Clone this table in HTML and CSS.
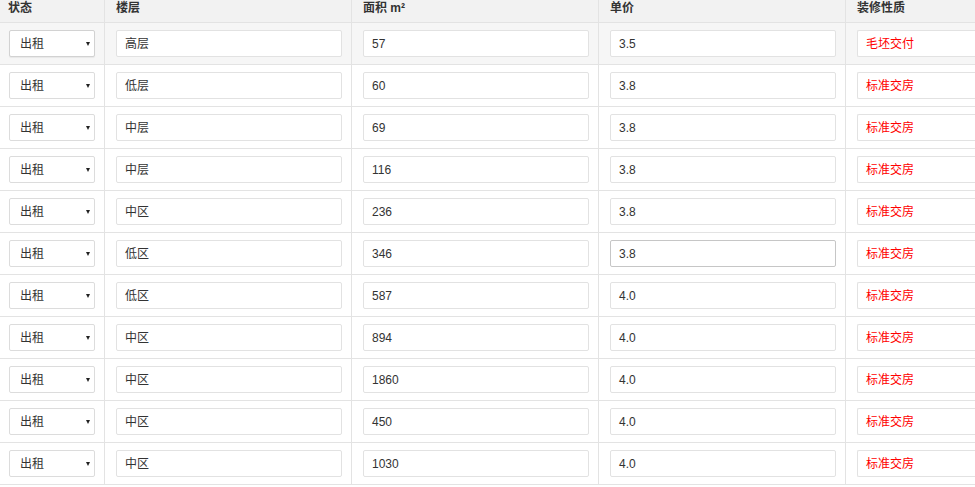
FILE: index.html
```html
<!DOCTYPE html>
<html lang="zh">
<head>
<meta charset="utf-8">
<link rel="stylesheet" href="styles.css">
</head>
<body>
<div class="grid">
  <div class="th">状态</div><div class="th pad">楼层</div><div class="th pad">面积 m²</div><div class="th pad">单价</div><div class="th pad last">装修性质</div>

  <div class="row hover">
    <div class="td c1"><div class="sel">出租<span class="arr"></span></div></div>
    <div class="td"><div class="inp">高层</div></div>
    <div class="td"><div class="inp">57</div></div>
    <div class="td"><div class="inp">3.5</div></div>
    <div class="td last"><div class="inp red">毛坯交付</div></div>
  </div>
  <div class="row">
    <div class="td c1"><div class="sel">出租<span class="arr"></span></div></div>
    <div class="td"><div class="inp">低层</div></div>
    <div class="td"><div class="inp">60</div></div>
    <div class="td"><div class="inp">3.8</div></div>
    <div class="td last"><div class="inp red">标准交房</div></div>
  </div>
  <div class="row">
    <div class="td c1"><div class="sel">出租<span class="arr"></span></div></div>
    <div class="td"><div class="inp">中层</div></div>
    <div class="td"><div class="inp">69</div></div>
    <div class="td"><div class="inp">3.8</div></div>
    <div class="td last"><div class="inp red">标准交房</div></div>
  </div>
  <div class="row">
    <div class="td c1"><div class="sel">出租<span class="arr"></span></div></div>
    <div class="td"><div class="inp">中层</div></div>
    <div class="td"><div class="inp">116</div></div>
    <div class="td"><div class="inp">3.8</div></div>
    <div class="td last"><div class="inp red">标准交房</div></div>
  </div>
  <div class="row">
    <div class="td c1"><div class="sel">出租<span class="arr"></span></div></div>
    <div class="td"><div class="inp">中区</div></div>
    <div class="td"><div class="inp">236</div></div>
    <div class="td"><div class="inp">3.8</div></div>
    <div class="td last"><div class="inp red">标准交房</div></div>
  </div>
  <div class="row">
    <div class="td c1"><div class="sel">出租<span class="arr"></span></div></div>
    <div class="td"><div class="inp">低区</div></div>
    <div class="td"><div class="inp">346</div></div>
    <div class="td"><div class="inp focus">3.8</div></div>
    <div class="td last"><div class="inp red">标准交房</div></div>
  </div>
  <div class="row">
    <div class="td c1"><div class="sel">出租<span class="arr"></span></div></div>
    <div class="td"><div class="inp">低区</div></div>
    <div class="td"><div class="inp">587</div></div>
    <div class="td"><div class="inp">4.0</div></div>
    <div class="td last"><div class="inp red">标准交房</div></div>
  </div>
  <div class="row">
    <div class="td c1"><div class="sel">出租<span class="arr"></span></div></div>
    <div class="td"><div class="inp">中区</div></div>
    <div class="td"><div class="inp">894</div></div>
    <div class="td"><div class="inp">4.0</div></div>
    <div class="td last"><div class="inp red">标准交房</div></div>
  </div>
  <div class="row">
    <div class="td c1"><div class="sel">出租<span class="arr"></span></div></div>
    <div class="td"><div class="inp">中区</div></div>
    <div class="td"><div class="inp">1860</div></div>
    <div class="td"><div class="inp">4.0</div></div>
    <div class="td last"><div class="inp red">标准交房</div></div>
  </div>
  <div class="row">
    <div class="td c1"><div class="sel">出租<span class="arr"></span></div></div>
    <div class="td"><div class="inp">中区</div></div>
    <div class="td"><div class="inp">450</div></div>
    <div class="td"><div class="inp">4.0</div></div>
    <div class="td last"><div class="inp red">标准交房</div></div>
  </div>
  <div class="row">
    <div class="td c1"><div class="sel">出租<span class="arr"></span></div></div>
    <div class="td"><div class="inp">中区</div></div>
    <div class="td"><div class="inp">1030</div></div>
    <div class="td"><div class="inp">4.0</div></div>
    <div class="td last"><div class="inp red">标准交房</div></div>
  </div>
</div>
</body>
</html>
```

FILE: styles.css
```css
html, body {
  margin: 0;
  padding: 0;
  background: #fff;
  overflow: hidden;
}
body {
  width: 975px;
  height: 487px;
  font-family: "Liberation Sans", "Noto Sans CJK SC", sans-serif;
  font-size: 12px;
  color: #333;
}
.grid {
  display: grid;
  grid-template-columns: 105px 247px 247px 247px 129px;
  width: 975px;
}
.row {
  display: contents;
}
.th {
  height: 23px;
  box-sizing: border-box;
  background: #f2f2f2;
  border-right: 1px solid #e3e3e3;
  border-bottom: 1px solid #e3e3e3;
  font-weight: bold;
  line-height: 15px;
  padding: 1px 0 0 8px;
  color: #333;
}
.th.pad {
  padding-left: 11px;
}
.td {
  height: 42px;
  box-sizing: border-box;
  border-right: 1px solid #e3e3e3;
  border-bottom: 1px solid #e3e3e3;
  padding: 7px 9px 0 11px;
  background: #fff;
}
.th.last,
.td.last {
  border-right: none;
  padding-right: 0;
}
.row.hover .td {
  background: #f6f6f6;
}
.td.c1 {
  padding-left: 9px;
}
.inp {
  height: 27px;
  box-sizing: border-box;
  border: 1px solid #e2e2e2;
  border-radius: 2px;
  background: #fff;
  line-height: 25px;
  padding: 1px 0 0 8px;
  color: #333;
  white-space: nowrap;
  overflow: hidden;
}
.td.last .inp {
  border-right: none;
  border-radius: 2px 0 0 2px;
}
.inp.red {
  color: #f00;
}
.inp.focus {
  border-color: #c6c6c6;
}
.sel {
  position: relative;
  width: 86px;
  height: 27px;
  box-sizing: border-box;
  border: 1px solid #dcdcdc;
  border-radius: 2px;
  background: #fff;
  line-height: 25px;
  padding: 1px 0 0 10px;
  color: #333;
}
.row.hover .sel {
  border-color: #d2d2d2;
  box-shadow: 0 1px 1px rgba(0,0,0,0.06);
}
.arr {
  position: absolute;
  left: 76px;
  top: 11px;
  width: 0;
  height: 0;
  border-left: 2px solid transparent;
  border-right: 2px solid transparent;
  border-top: 4px solid #222;
}
```
